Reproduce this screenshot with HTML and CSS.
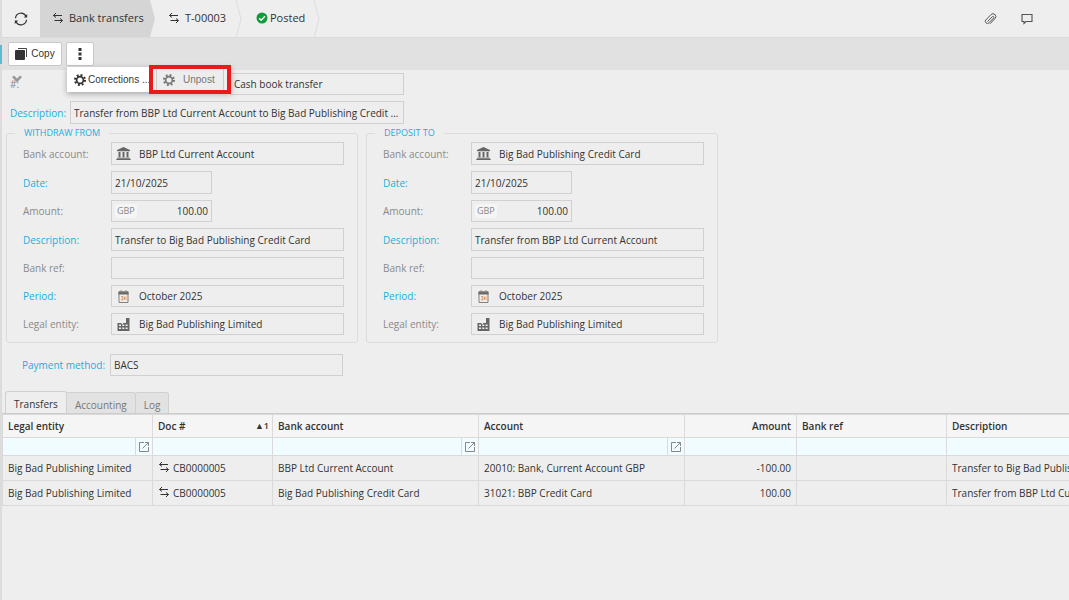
FILE: index.html
```html
<!DOCTYPE html>
<html lang="en">
<head>
    <meta charset="UTF-8">
    <meta name="viewport" content="width=device-width, initial-scale=1.0">
    <title>T-00003 - Bank transfers</title>
    <link rel="stylesheet" href="styles.css">
</head>
<body>
<svg class="defs" aria-hidden="true">
    <symbol id="i-transfer" viewBox="0 0 12 12">
        <path d="M4 1 1.5 3.500H10M1.500 3.500 4 5.500M8 6.500 10.500 8.500H2.500M10.500 8.500 8 11" fill="none" stroke="currentColor"/>
    </symbol>
    <symbol id="i-gear" viewBox="0 0 12 12">
        <circle cx="6" cy="6" r="3.4" fill="none" stroke="currentColor" stroke-width="1.7"/>
        <circle cx="6" cy="6" r="5" fill="none" stroke="currentColor" stroke-width="2" stroke-dasharray="1.96 1.96"/>
    </symbol>
    <symbol id="i-bank" viewBox="0 0 15 13">
        <path d="M7.5 0 14 3v1.3H1V3zM2.5 5h2v5.3h-2zM6.5 5h2v5.3h-2zM10.5 5h2v5.3h-2zM1 10.8h13v.9H1zM.3 12.1h14.4v.9H.3z" fill="currentColor"/>
    </symbol>
    <symbol id="i-calendar" viewBox="0 0 12 13">
        <path d="M1.5 2h9v10.5h-9z" fill="none" stroke="#8a7f78"/>
        <path d="M1 1.5h10v3H1z" fill="#6f6a68"/>
        <path d="M3.5 0v2.5M8.5 0v2.5" stroke="#8a8a8a"/>
        <path d="M3.5 6.5h2V10h-2M4 8.2h1.5M7 10V6.5M8.5 6.5V10" fill="none" stroke="#d99a66" stroke-width=".9"/>
    </symbol>
    <symbol id="i-factory" viewBox="0 0 13 13">
        <path d="M9 0h3.5v13H.5V5h4v1H6V5h3z" fill="currentColor"/>
        <path d="M2 6.5h2V8H2zM5.3 6.5h2V8h-2zM8.6 6.5h2V8h-2zM2 9.5h2V11H2zM5.3 9.5h2V11h-2zM8.6 9.5h2V11h-2z" fill="#eee"/>
    </symbol>
    <symbol id="i-open" viewBox="0 0 10 10">
        <path d="M5 .5H.5v9h9V5M6 .5h3.500V4M9.500.5l-6 6" fill="none" stroke="currentColor"/>
    </symbol>
</svg>

<div class="app">
    <header class="topbar">
        <button class="refresh" aria-label="Refresh">
            <svg viewBox="0 0 14 14" width="14" height="14"><path d="M1.5 6.2A5.5 5.5 0 0 1 11.8 4M12.5 7.8A5.5 5.5 0 0 1 2.2 10" fill="none" stroke="#333" stroke-width="1.2"/><path d="M13.2 2v3.4H9.8zM.8 12V8.6h3.4z" fill="#333"/></svg>
        </button>
        <nav class="crumbs">
            <a class="crumb crumb-active" href="#"><svg class="icon"><use href="#i-transfer"/></svg>Bank transfers</a>
            <a class="crumb crumb-doc" href="#"><svg class="icon"><use href="#i-transfer"/></svg>T-00003<svg class="chevron" viewBox="0 0 6 38"><path d="M0 0 5 19 0 38" fill="none" stroke="#dcdcdc"/></svg></a>
            <a class="crumb crumb-status" href="#"><svg class="status" viewBox="0 0 12 12"><circle cx="6" cy="6" r="5.5" fill="#109a3c"/><path d="M3.2 6.2 5.2 8.2 8.9 4.2" fill="none" stroke="#fff" stroke-width="1.5"/></svg>Posted<svg class="chevron" viewBox="0 0 6 38"><path d="M0 0 5 19 0 38" fill="none" stroke="#dcdcdc"/></svg></a>
        </nav>
        <div class="tools">
            <button aria-label="Attachments"><svg viewBox="0 0 14 14" width="14" height="14"><path d="M4.500 9.500 9.500 4.500a1 1 0 0 1 1.200 1.500L6 10.800a2 2 0 0 1-3.100-2.900L8 2.600a2.700 2.700 0 0 1 4 3.900L7 11.800" fill="none" stroke="#555"/></svg></button>
            <button aria-label="Comments"><svg viewBox="0 0 12 12" width="12" height="12"><path d="M1 1.5h10v7H5L3 10.5v-2H1z" fill="none" stroke="#555" stroke-width="1.1"/></svg></button>
        </div>
    </header>

    <div class="toolbar">
        <button class="btn"><svg class="icon" viewBox="0 0 12 12"><path d="M3 .5h8.5V9" fill="none" stroke="#444"/><rect x="0" y="2" width="10" height="10" rx="1" fill="#333"/></svg>Copy</button>
        <div class="more">
            <button class="btn btn-more" aria-label="More"><svg viewBox="0 0 4 14" width="4" height="14"><path d="M.5 1h3v3h-3zM.5 5.5h3v3h-3zM.5 10h3v3h-3z" fill="#333"/></svg></button>
            <div class="menu">
                <button class="menu-item"><svg class="icon"><use href="#i-gear"/></svg>Corrections ...</button>
                <div class="highlight">
                    <button class="submenu-item"><svg class="icon"><use href="#i-gear"/></svg>Unpost</button>
                </div>
            </div>
        </div>
    </div>

    <main>
        <form class="form">
            <div class="head-row head-number">
                <label for="type">#:<svg class="pin" viewBox="0 0 12 9"><path d="M1 2 3 .5 6 3.5 9 .5 11 2 6 7.5z" fill="#999"/></svg></label>
                <input id="type" class="field" value="Cash book transfer" readonly>
            </div>
            <div class="head-row">
                <label class="link" for="desc">Description:</label>
                <input id="desc" class="field" value="Transfer from BBP Ltd Current Account to Big Bad Publishing Credit Card" readonly>
            </div>

            <div class="groups">
                <fieldset>
                    <legend>WITHDRAW FROM</legend>
                    <div class="row">
                        <label for="w-bank">Bank account:</label>
                        <div class="field lookup"><svg><use href="#i-bank"/></svg><input id="w-bank" value="BBP Ltd Current Account" readonly></div>
                    </div>
                    <div class="row">
                        <label class="link" for="w-date">Date:</label>
                        <input id="w-date" class="field narrow" value="21/10/2025" readonly>
                    </div>
                    <div class="row compact">
                        <label for="w-amount">Amount:</label>
                        <div class="field narrow money"><span>GBP</span><input id="w-amount" value="100.00" readonly></div>
                    </div>
                    <div class="row">
                        <label class="link" for="w-desc">Description:</label>
                        <input id="w-desc" class="field" value="Transfer to Big Bad Publishing Credit Card" readonly>
                    </div>
                    <div class="row compact">
                        <label for="w-ref">Bank ref:</label>
                        <input id="w-ref" class="field" value="" readonly>
                    </div>
                    <div class="row compact">
                        <label class="link" for="w-period">Period:</label>
                        <div class="field lookup"><svg><use href="#i-calendar"/></svg><input id="w-period" value="October 2025" readonly></div>
                    </div>
                    <div class="row compact">
                        <label for="w-entity">Legal entity:</label>
                        <div class="field lookup"><svg><use href="#i-factory"/></svg><input id="w-entity" value="Big Bad Publishing Limited" readonly></div>
                    </div>
                </fieldset>

                <fieldset>
                    <legend>DEPOSIT TO</legend>
                    <div class="row">
                        <label for="d-bank">Bank account:</label>
                        <div class="field lookup"><svg><use href="#i-bank"/></svg><input id="d-bank" value="Big Bad Publishing Credit Card" readonly></div>
                    </div>
                    <div class="row">
                        <label class="link" for="d-date">Date:</label>
                        <input id="d-date" class="field narrow" value="21/10/2025" readonly>
                    </div>
                    <div class="row compact">
                        <label for="d-amount">Amount:</label>
                        <div class="field narrow money"><span>GBP</span><input id="d-amount" value="100.00" readonly></div>
                    </div>
                    <div class="row">
                        <label class="link" for="d-desc">Description:</label>
                        <input id="d-desc" class="field" value="Transfer from BBP Ltd Current Account" readonly>
                    </div>
                    <div class="row compact">
                        <label for="d-ref">Bank ref:</label>
                        <input id="d-ref" class="field" value="" readonly>
                    </div>
                    <div class="row compact">
                        <label class="link" for="d-period">Period:</label>
                        <div class="field lookup"><svg><use href="#i-calendar"/></svg><input id="d-period" value="October 2025" readonly></div>
                    </div>
                    <div class="row compact">
                        <label for="d-entity">Legal entity:</label>
                        <div class="field lookup"><svg><use href="#i-factory"/></svg><input id="d-entity" value="Big Bad Publishing Limited" readonly></div>
                    </div>
                </fieldset>
            </div>

            <div class="row payment">
                <label class="link" for="method">Payment method:</label>
                <input id="method" class="field" value="BACS" readonly>
            </div>
        </form>

        <div class="tabs" role="tablist">
            <button class="tab tab-active" role="tab" aria-selected="true">Transfers</button>
            <button class="tab" role="tab">Accounting</button>
            <button class="tab" role="tab">Log</button>
        </div>
        <div class="grid">
            <table>
                <colgroup>
                    <col class="c-entity"><col class="c-doc"><col class="c-account"><col class="c-account"><col class="c-amount"><col class="c-ref"><col class="c-desc">
                </colgroup>
                <thead>
                    <tr>
                        <th>Legal entity</th>
                        <th>Doc #<span class="sort">▲1</span></th>
                        <th>Bank account</th>
                        <th>Account</th>
                        <th class="num">Amount</th>
                        <th>Bank ref</th>
                        <th>Description</th>
                    </tr>
                    <tr class="filters">
                        <td><button aria-label="Pick legal entity"><svg><use href="#i-open"/></svg></button></td>
                        <td></td>
                        <td><button aria-label="Pick bank account"><svg><use href="#i-open"/></svg></button></td>
                        <td><button aria-label="Pick account"><svg><use href="#i-open"/></svg></button></td>
                        <td></td>
                        <td></td>
                        <td></td>
                    </tr>
                </thead>
                <tbody>
                    <tr>
                        <td>Big Bad Publishing Limited</td>
                        <td class="doc"><svg><use href="#i-transfer"/></svg>CB0000005</td>
                        <td>BBP Ltd Current Account</td>
                        <td>20010: Bank, Current Account GBP</td>
                        <td class="num">-100.00</td>
                        <td></td>
                        <td>Transfer to Big Bad Publishing Credit Card</td>
                    </tr>
                    <tr>
                        <td>Big Bad Publishing Limited</td>
                        <td class="doc"><svg><use href="#i-transfer"/></svg>CB0000005</td>
                        <td>Big Bad Publishing Credit Card</td>
                        <td>31021: BBP Credit Card</td>
                        <td class="num">100.00</td>
                        <td></td>
                        <td>Transfer from BBP Ltd Current Account</td>
                    </tr>
                </tbody>
            </table>
        </div>
    </main>
</div>
</body>
</html>
```
FILE: styles.css
```css
* {
    box-sizing: border-box;
}
body {
    margin: 0;
    background: #eee;
    color: #333;
    font: 10px/14px "Open Sans", "Noto Sans", sans-serif;
    overflow-x: hidden;
}
button, input {
    font: inherit;
    color: inherit;
    border: 0;
    padding: 0;
    margin: 0;
    background: none;
}
button {
    cursor: pointer;
}
a {
    color: inherit;
    text-decoration: none;
}
.defs {
    position: absolute;
    width: 0;
    height: 0;
}
.icon {
    width: 12px;
    height: 12px;
    flex: none;
}
.app {
    min-height: 100vh;
    border-left: 2px solid #dcdcdc;
}

/* top bar */
.topbar {
    display: flex;
    height: 38px;
    border-bottom: 1px solid #dadada;
}
.refresh {
    width: 38px;
    display: flex;
    align-items: center;
    justify-content: center;
}
.crumbs {
    display: flex;
    font-size: 11px;
}
.crumb {
    position: relative;
    display: flex;
    align-items: center;
    gap: 5px;
    padding-left: 12px;
    padding-bottom: 1px;
}
.crumb-active {
    width: 115px;
    background: #d5d5d5;
    clip-path: polygon(0 0, 110px 0, 100% 50%, 110px 100%, 0 100%);
}
.crumb-doc {
    width: 87px;
    padding-left: 13px;
}
.crumb-status {
    width: 78px;
    gap: 2px;
    padding-left: 14px;
}
.status {
    width: 12px;
    height: 12px;
}
.chevron {
    position: absolute;
    right: 0;
    top: 0;
    width: 6px;
    height: 38px;
}
.tools {
    display: flex;
    gap: 24px;
    margin-left: auto;
    padding-right: 36px;
}
.tools button {
    display: flex;
    align-items: center;
}

/* actions */
.toolbar {
    position: relative;
    display: flex;
    align-items: center;
    gap: 4px;
    height: 32px;
    padding: 0 6px;
    background: #e1e1e1;
}
/* selected entry of the collapsed side menu */
.toolbar::before {
    content: "";
    position: absolute;
    left: -2px;
    top: 7px;
    width: 2px;
    height: 19px;
    background: #5bb9d3;
}
.btn {
    display: flex;
    align-items: center;
    justify-content: center;
    gap: 4px;
    width: 54px;
    height: 24px;
    background: #fff;
    border: 1px solid #c8c8c8;
    border-radius: 2px;
    font-family: "Liberation Sans", Arial, sans-serif;
}
.btn-more {
    width: 28px;
}
.more {
    position: relative;
}
.menu {
    position: absolute;
    z-index: 2;
    top: 25px;
    left: 1px;
    display: flex;
    align-items: center;
    height: 25px;
    background: #fff;
    box-shadow: 0 2px 6px rgba(0, 0, 0, 0.3);
    font-family: "Liberation Sans", Arial, sans-serif;
}
.menu-item {
    display: flex;
    align-items: center;
    gap: 2px;
    width: 82px;
    padding-left: 7px;
    white-space: nowrap;
}
.highlight {
    height: 29px;
    width: 82px;
    padding: 0 3px;
    background: #eee;
    border: 4px solid #e81a1a;
}
.submenu-item {
    display: flex;
    align-items: center;
    gap: 8px;
    width: 100%;
    height: 100%;
    padding-left: 6px;
    border: solid #ccc;
    border-width: 0 1px;
    background: #ededed;
    color: #777;
}

/* form */
.form {
    padding: 3px 4px 0;
}
.head-row {
    display: flex;
    align-items: center;
    width: 398px;
    height: 23px;
    margin-bottom: 2px;
    padding-left: 4px;
}
.head-row label {
    position: relative;
    width: 60px;
    flex: none;
}
.head-number {
    height: 22px;
    margin-bottom: 6px;
}
.head-number .field {
    margin-left: 160px;
}
.pin {
    position: absolute;
    left: 1px;
    top: -2px;
    width: 12px;
    height: 9px;
}
label {
    color: #8a8a8a;
}
label.link {
    color: #1aaee0;
}
.field {
    flex: 1;
    min-width: 0;
    height: 100%;
    padding: 0 3px;
    border: 1px solid #d0d0d0;
    text-overflow: ellipsis;
}
.field input {
    flex: 1;
    min-width: 0;
}
.groups {
    display: flex;
    gap: 8px;
}
fieldset {
    width: 352px;
    min-width: 0;
    margin: 0;
    padding: 2px 13px 7px 16px;
    border: 1px solid #dcdcdc;
    border-radius: 3px;
}
legend {
    margin-left: -8px;
    padding: 0 9px;
    color: #1aaee0;
    font-size: 9px;
    line-height: 14px;
}
.row {
    display: flex;
    align-items: center;
    height: 23px;
    margin-bottom: 6px;
}
.row label {
    width: 88px;
    flex: none;
}
.compact {
    height: 22px;
}
.row:last-child {
    margin-bottom: 0;
}
.row .narrow {
    flex: 0 0 101px;
}
.lookup, .money {
    display: flex;
    align-items: center;
}
.lookup svg {
    width: 15px;
    height: 13px;
    margin: 0 8px 0 1px;
    color: #666;
}
.money span {
    padding: 0 2px;
    border-radius: 2px;
    background: #f5f5f5;
    color: #888;
    font-size: 9px;
}
.money input {
    text-align: right;
}
.row.payment {
    width: 337px;
    height: 22px;
    margin: 11px 0 15px;
    padding-left: 16px;
}

/* tabs */
.tabs {
    display: flex;
    align-items: flex-end;
    height: 22px;
    padding-left: 3px;
}
.tab {
    height: 21px;
    padding: 3px 8px 0;
    margin-left: -1px;
    border: 1px solid #d0d0d0;
    border-bottom: 0;
    border-radius: 3px 3px 0 0;
    background: #e2e2e2;
    color: #777;
}
.tab-active {
    height: 22px;
    padding: 2px 8px 0;
    margin-left: 0;
    background: #eee;
    color: #333;
}

/* grid */
.grid {
    overflow: hidden;
    border-top: 1px solid #ccc;
}
table {
    width: 1200px;
    table-layout: fixed;
    border-collapse: collapse;
}
.c-entity {
    width: 150px;
}
.c-doc {
    width: 120px;
}
.c-account {
    width: 206px;
}
.c-amount {
    width: 112px;
}
.c-ref {
    width: 150px;
}
th, td {
    height: 25px;
    padding: 0 5px;
    border: 1px solid #dadada;
    text-align: left;
    white-space: nowrap;
}
th {
    height: 23px;
    background: #f5f5f5;
    font-weight: 600;
}
.filters td {
    height: 18px;
    padding: 0;
    background: #f0fcff;
}
.filters button {
    display: flex;
    align-items: center;
    justify-content: center;
    width: 17px;
    height: 17px;
    margin-left: auto;
    border-left: 1px solid #dadada;
    color: #888;
}
.filters svg {
    width: 10px;
    height: 10px;
}
th.num, td.num {
    text-align: right;
}
.sort {
    float: right;
    margin-right: -2px;
    font-size: 9px;
}
.doc svg {
    width: 12px;
    height: 12px;
    margin: 0 3px -1px 0;
}
```
